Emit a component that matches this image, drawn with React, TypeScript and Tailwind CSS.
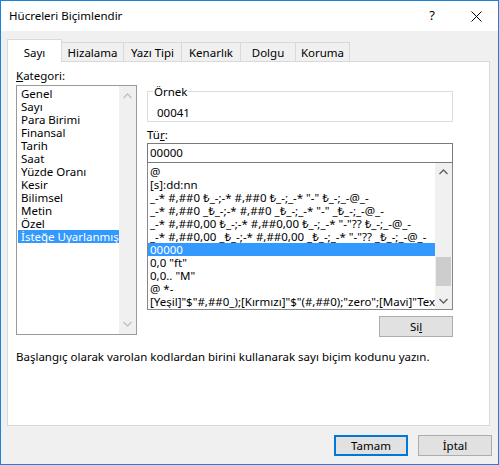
import React from 'react';

const font = { fontFamily: '"Noto Sans", "Open Sans", sans-serif' };

const tabs = ['Sayı', 'Hizalama', 'Yazı Tipi', 'Kenarlık', 'Dolgu', 'Koruma'];
const tabWidths = ['w-[55px]', 'w-[62px]', 'w-[58px]', 'w-[59px]', 'w-[55px]', 'w-[54px]'];

const categories = [
  'Genel',
  'Sayı',
  'Para Birimi',
  'Finansal',
  'Tarih',
  'Saat',
  'Yüzde Oranı',
  'Kesir',
  'Bilimsel',
  'Metin',
  'Özel',
  'İsteğe Uyarlanmış',
];

const formats = [
  '@',
  '[s]:dd:nn',
  '_-* #,##0 ₺_-;-* #,##0 ₺_-;_-* "-" ₺_-;_-@_-',
  '_-* #,##0 _₺_-;-* #,##0 _₺_-;_-* "-" _₺_-;_-@_-',
  '_-* #,##0,00 ₺_-;-* #,##0,00 ₺_-;_-* "-"?? ₺_-;_-@_-',
  '_-* #,##0,00 _₺_-;-* #,##0,00 _₺_-;_-* "-"?? _₺_-;_-@_-',
  '00000',
  '0,0 "ft"',
  '0,0.. "M"',
  '@ *-',
  '[Yeşil]"$"#,##0_);[Kırmızı]"$"(#,##0);"zero";[Mavi]"Text:" @',
];

const Chevron: React.FC<{ up?: boolean; color: string }> = ({ up, color }) => (
  <svg width="9" height="6" viewBox="0 0 9 6">
    <polyline
      points={up ? '0.5,5 4.5,1 8.5,5' : '0.5,1 4.5,5 8.5,1'}
      fill="none"
      stroke={color}
      strokeWidth="1.4"
    />
  </svg>
);

export default function App() {
  return (
    <div
      className="w-[499px] h-[465px] border border-[#1883d7] bg-[#f0f0f0] flex flex-col text-[11.5px] text-black overflow-hidden"
      style={font}
    >
      {/* title bar */}
      <div className="h-[30px] bg-white flex items-center justify-between pl-[8px] pr-[16px] shrink-0">
        <span className="text-[11.5px]">Hücreleri Biçimlendir</span>
        <div className="flex items-center gap-[36px]">
          <span className="text-[13px]">?</span>
          <svg width="11" height="11" viewBox="0 0 11 11">
            <path d="M0.5 0.5 L10.5 10.5 M10.5 0.5 L0.5 10.5" stroke="#000" strokeWidth="1" />
          </svg>
        </div>
      </div>

      {/* tabs */}
      <div className="flex items-end h-[30px] pl-[6px] pt-[7px] shrink-0">
        {tabs.map((t, i) =>
          i === 0 ? (
            <div
              key={t}
              className={`${tabWidths[i]} h-[23px] bg-white border border-b-0 border-[#d9d9d9] flex items-center justify-center pt-[3px] relative top-[1px] z-10`}
            >
              {t}
            </div>
          ) : (
            <div
              key={t}
              className={`${tabWidths[i]} h-[19px] bg-[#f0f0f0] border border-b-0 border-l-0 border-[#d9d9d9] flex items-center justify-center pt-[1px]`}
            >
              {t}
            </div>
          )
        )}
      </div>

      {/* panel */}
      <div className="ml-[6px] w-[483px] h-[365px] bg-white border border-[#d9d9d9] flex flex-col px-[8px] pt-[6px] shrink-0">
        <div className="flex gap-[10px]">
          {/* left column */}
          <div className="w-[121px] flex flex-col">
            <div className="leading-[15px] h-[15px]">
              <span className="underline">K</span>ategori:
            </div>
            <div className="mt-[2px] h-[250px] border border-[#9a9a9a] flex">
              <div className="flex-1 pt-[1px] pl-[1px]">
                {categories.map((c, i) => (
                  <div
                    key={c}
                    className={`h-[13px] leading-[13px] pl-[3px] whitespace-nowrap ${
                      i === categories.length - 1 ? 'bg-[#3399ff] text-white' : ''
                    }`}
                  >
                    {c}
                  </div>
                ))}
              </div>
              <div className="w-[17px] bg-[#f0f0f0] flex flex-col items-center justify-between py-[7px]">
                <Chevron up color="#c2c2c2" />
                <Chevron color="#c2c2c2" />
              </div>
            </div>
          </div>

          {/* right column */}
          <div className="w-[306px] flex flex-col">
            <fieldset className="mt-[16px] border border-[#dcdcdc] pl-[5px] pb-0 h-[38px]">
              <legend className="px-[1px] leading-[15px]">Örnek</legend>
              <div className="leading-[15px] pl-[4px] pt-[6px]">00041</div>
            </fieldset>
            <div className="mt-[5px] leading-[15px] h-[15px]">
              Tü<span className="underline">r</span>:
            </div>
            <div className="mt-[1px] h-[20px] border border-[#7a7a7a] flex items-center pl-[2px]">
              00000
            </div>
            <div className="h-[147px] border border-t-0 border-[#828790] flex overflow-hidden">
              <div className="flex-1 pt-[2px] overflow-hidden">
                {formats.map((f, i) => (
                  <div
                    key={i}
                    className={`h-[13px] leading-[13px] pl-[2px] whitespace-pre overflow-hidden ${
                      i === 6 ? 'bg-[#3399ff] text-white' : ''
                    }`}
                  >
                    {f}
                  </div>
                ))}
              </div>
              <div className="w-[17px] bg-[#f0f0f0] flex flex-col items-center">
                <div className="h-[17px] flex items-center justify-center">
                  <Chevron up color="#606060" />
                </div>
                <div className="h-[77px]" />
                <div className="w-[15px] h-[29px] bg-[#cdcdcd]" />
                <div className="flex-1" />
                <div className="h-[17px] flex items-center justify-center">
                  <Chevron color="#606060" />
                </div>
              </div>
            </div>
            <div className="flex justify-end mt-[6px]">
              <button className="w-[74px] h-[21px] bg-[#e1e1e1] border border-[#adadad] flex items-center justify-center">
                Si<span className="underline">l</span>
              </button>
            </div>
          </div>
        </div>
        <div className="mt-[12px] leading-[15px]">
          Başlangıç olarak varolan kodlardan birini kullanarak sayı biçim kodunu yazın.
        </div>
      </div>

      {/* buttons */}
      <div className="flex justify-end gap-[10px] pr-[6px] pt-[9px]">
        <button className="w-[74px] h-[21px] bg-[#e1e1e1] border-2 border-[#0078d7] flex items-center justify-center">
          Tamam
        </button>
        <button className="w-[74px] h-[21px] bg-[#e1e1e1] border border-[#adadad] flex items-center justify-center">
          İptal
        </button>
      </div>
    </div>
  );
}
